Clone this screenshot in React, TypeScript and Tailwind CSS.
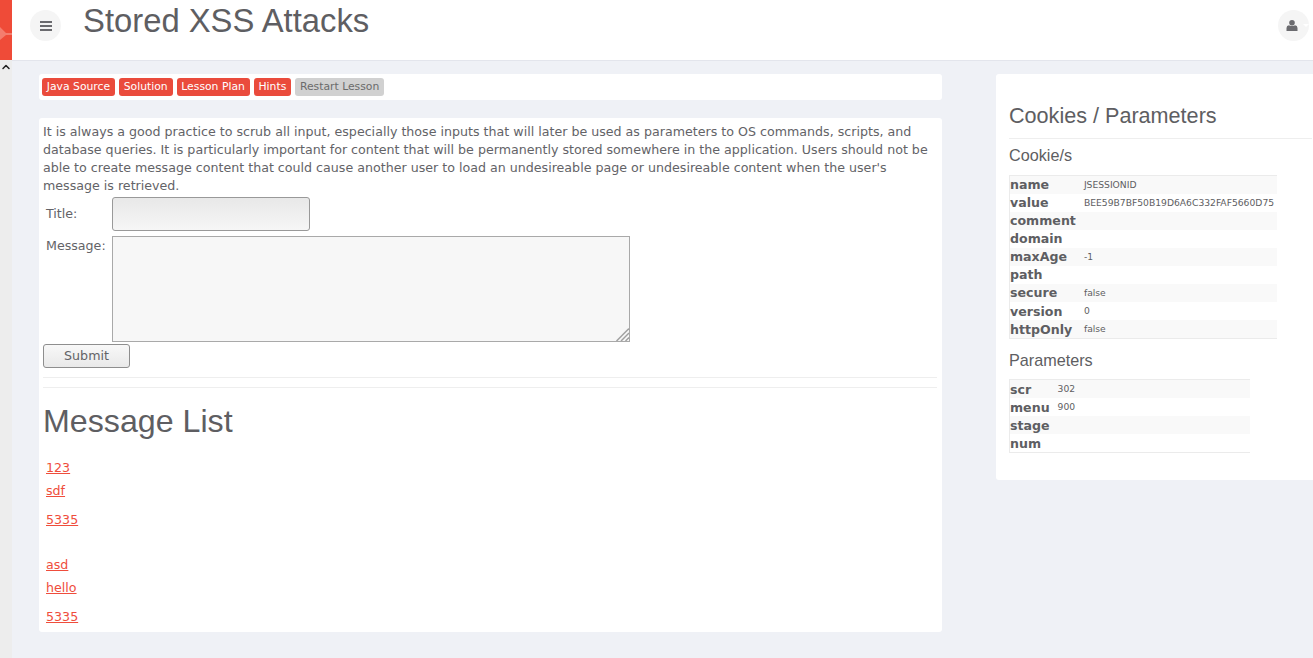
import React from 'react';
import { ChevronUp } from 'lucide-react';

const cookies: [string, string][] = [
  ['name', 'JSESSIONID'],
  ['value', 'BEE59B7BF50B19D6A6C332FAF5660D75'],
  ['comment', ''],
  ['domain', ''],
  ['maxAge', '-1'],
  ['path', ''],
  ['secure', 'false'],
  ['version', '0'],
  ['httpOnly', 'false'],
];

const params: [string, string][] = [
  ['scr', '302'],
  ['menu', '900'],
  ['stage', ''],
  ['num', ''],
];

const lessonButtons = ['Java Source', 'Solution', 'Lesson Plan', 'Hints'];

// row heights are fractional in the original, so some keys sit a pixel lower
const InfoTable = ({ rows, width, shiftFrom }: { rows: [string, string][]; width: string; shiftFrom: number }) => (
  <table className={`${width} border-collapse border-t border-b border-l border-[#ebebeb] text-[12.6px]`}>
    <tbody>
      {rows.map(([k, v], i) => (
        <tr key={k} className={`h-[18px] ${i % 2 === 0 ? 'bg-[#f9f9f9]' : 'bg-white'}`}>
          <td className={`w-px whitespace-nowrap p-0 pr-[8px] align-middle font-bold ${i >= shiftFrom ? 'pt-[2px] leading-[16px]' : 'leading-[18px]'}`}>{k}</td>
          <td className="p-0 align-top text-[9.2px] leading-[18px]">{v}</td>
        </tr>
      ))}
    </tbody>
  </table>
);

const MessageLink = ({ text, className }: { text: string; className: string }) => (
  <div className={`pl-[3px] ${className}`}>
    <a href="#" className="text-[#ef4d3c] underline">{text}</a>
  </div>
);

export default function App() {
  return (
    <div className="flex h-[658px] w-[1313px] overflow-hidden bg-[#eff1f6] font-['DejaVu_Sans',sans-serif] text-[12.65px] leading-[18px] text-[#636367]">
      <aside className="flex w-[12px] shrink-0 flex-col bg-[#ededed]">
        <div className="h-[60px] overflow-hidden bg-[#ef4b38]">
          <svg width="12" height="60" viewBox="0 0 12 60" fill="none">
            <path d="M0 27 L6 33 L12 33 L12 35 L6 35 L0 40 Z" fill="#f47d6e" />
          </svg>
        </div>
        <ChevronUp className="mt-[1px] h-[12px] w-[12px] text-[#222]" strokeWidth={3} />
      </aside>

      <div className="flex min-w-0 flex-1 flex-col">
        <header className="flex h-[61px] shrink-0 items-start justify-between border-b border-[#e3e5ec] bg-white pl-[18px] pr-[4px]">
          <div className="flex items-start">
            <button className="mt-[10px] flex h-[31px] w-[31px] items-center justify-center rounded-full bg-[#f5f5f5]">
              <svg width="12" height="10" viewBox="0 0 12 10" fill="#6b6b6f">
                <rect y="0" width="12" height="2" />
                <rect y="4" width="12" height="2" />
                <rect y="8" width="12" height="2" />
              </svg>
            </button>
            <h1 className="ml-[22px] mt-[2px] font-['Liberation_Sans',sans-serif] text-[32.8px] leading-[38px] font-normal text-[#5e5e62]">Stored XSS Attacks</h1>
          </div>
          <button className="mt-[10px] flex h-[31px] w-[31px] items-center rounded-full bg-[#f5f5f5] pl-[8px]">
            <svg width="12" height="11" viewBox="0 0 12 11" fill="#6b6b6f">
              <circle cx="6" cy="2.8" r="2.8" />
              <path d="M0.5 11 L0.5 8 Q0.5 5.5 3 5.2 Q6 7 9 5.2 Q11.5 5.5 11.5 8 L11.5 11 Z" />
            </svg>
            <svg className="ml-[5px]" width="6" height="3" viewBox="0 0 6 3" fill="#ffffff">
              <path d="M0 0 H6 L3 3 Z" />
            </svg>
          </button>
        </header>

        <main className="flex min-h-0 flex-1 items-start pl-[27px] pt-[13px]">
          <div className="flex w-[903px] shrink-0 flex-col gap-[18px]">
            <div className="flex h-[26px] items-center gap-[4px] rounded-[3px] bg-white pl-[3px] text-[10.8px]">
              {lessonButtons.map((b) => (
                <button key={b} className="flex h-[18px] items-center rounded-[3px] bg-[#ea4b3c] px-[4.8px] text-white">{b}</button>
              ))}
              <button className="flex h-[18px] items-center rounded-[3px] bg-[#d1d1d1] px-[4.8px] text-[#6b6b6b]">Restart Lesson</button>
            </div>

            <section className="flex h-[514px] flex-col rounded-[3px] bg-white pl-[4px] pr-[5px] pt-[5px]">
              <p>
                It is always a good practice to scrub all input, especially those inputs that will later be used as parameters to OS commands, scripts, and database queries. It is particularly important for content that will be permanently stored somewhere in the application. Users should not be able to create message content that could cause another user to load an undesireable page or undesireable content when the user's message is retrieved.
              </p>
              <div className="mt-[2px] flex items-center">
                <label className="w-[69px] pl-[3px]">Title:</label>
                <input className="h-[34px] w-[198px] rounded-[3px] border border-[#999999] bg-gradient-to-b from-[#e8e8e8] to-[#f6f6f6]" />
              </div>
              <div className="mt-[5px] flex items-start">
                <label className="w-[69px] pl-[3px] pt-px">Message:</label>
                <div className="relative h-[106px] w-[518px]">
                  <textarea className="block h-full w-full resize-none border border-[#a9a9a9] bg-[#f7f7f7]" />
                  <svg className="absolute bottom-px right-px" width="13" height="13" viewBox="0 0 13 13" fill="none" stroke="#a0a0a0" strokeWidth="1.5">
                    <path d="M0.5 13 L13 0.5" />
                    <path d="M5 13 L13 5" />
                    <path d="M9.5 13 L13 9.5" />
                  </svg>
                </div>
              </div>
              <button className="mt-[2px] h-[24px] w-[87px] rounded-[3px] border border-[#8e8e8e] bg-gradient-to-b from-[#f8f8f8] to-[#e9e9e9]">Submit</button>
              <hr className="mt-[9px] border-[#eeeeee]" />
              <hr className="mt-[9px] border-[#eeeeee]" />
              <h2 className="mt-[15px] font-['Liberation_Sans',sans-serif] text-[32.2px] leading-[36px] font-normal text-[#5e5e62]">Message List</h2>
              <MessageLink text="123" className="mt-[20px]" />
              <MessageLink text="sdf" className="mt-[5px]" />
              <MessageLink text="5335" className="mt-[11px]" />
              <MessageLink text="asd" className="mt-[27px]" />
              <MessageLink text="hello" className="mt-[5px]" />
              <MessageLink text="5335" className="mt-[11px]" />
            </section>
          </div>

          <aside className="ml-[54px] h-[406px] w-[330px] shrink-0 rounded-[3px] bg-white pl-[13px] pt-[29px] text-[#5e5e62]">
            <h3 className="w-[303px] border-b border-[#eeeeee] pb-[9px] font-['Liberation_Sans',sans-serif] text-[21.6px] leading-[26px] font-normal">Cookies / Parameters</h3>
            <h4 className="mb-[11px] mt-[7px] font-['Liberation_Sans',sans-serif] text-[16.2px] leading-[18px] font-normal">Cookie/s</h4>
            <InfoTable rows={cookies} width="w-[268px]" shiftFrom={7} />
            <h4 className="mb-[10px] mt-[12px] font-['Liberation_Sans',sans-serif] text-[16.2px] leading-[18px] font-normal">Parameters</h4>
            <InfoTable rows={params} width="w-[241px]" shiftFrom={0} />
          </aside>
        </main>
      </div>
    </div>
  );
}
